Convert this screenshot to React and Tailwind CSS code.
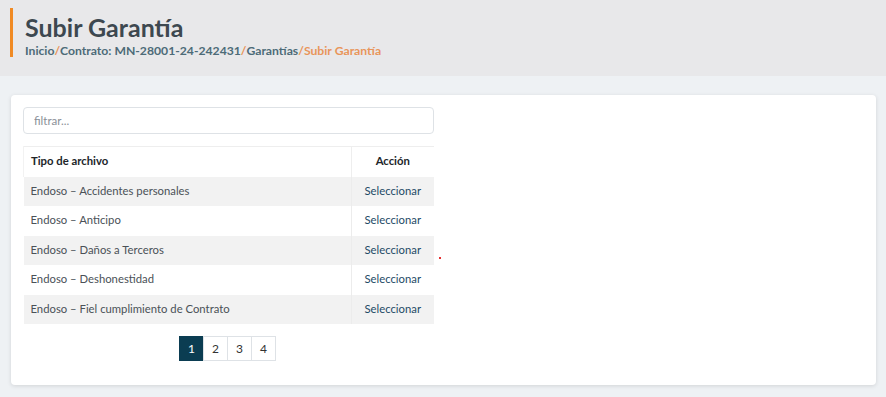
const rows = [
  'Endoso – Accidentes personales',
  'Endoso – Anticipo',
  'Endoso – Daños a Terceros',
  'Endoso – Deshonestidad',
  'Endoso – Fiel cumplimiento de Contrato',
];

const App = () => {
  return (
    <div className="min-h-[397px] bg-[#eef1f4] font-['Lato',sans-serif]">
      {/* Page header */}
      <div className="h-[76px] bg-[#e8e8ea] pt-2 pl-[10px]">
        <div className="border-l-[3px] border-[#f08a24] pl-3 h-[49px]">
          <h1 className="text-[25px] leading-[30px] font-bold text-[#3d4850] pt-[4px]">Subir Garantía</h1>
          <div className="text-[12.2px] font-bold leading-[16px] text-[#4d6b78] mt-[1px]">
            Inicio<span className="text-[#e8955a]">/</span>Contrato: MN-28001-24-242431
            <span className="text-[#e8955a]">/</span>Garantías
            <span className="text-[#e8955a]">/Subir Garantía</span>
          </div>
        </div>
      </div>

      {/* Card */}
      <div className="pt-[19px] pl-[11px] pr-[10px]">
        <div className="relative bg-white rounded shadow-[0_1px_4px_rgba(0,0,0,0.12)] p-3 pb-6">
          <input
            placeholder="filtrar..."
            className="w-[411px] h-[27px] border border-[#dee2e6] rounded px-[10px] text-[11.5px] text-[#495057] placeholder-[#8a9097] outline-none"
          />
          <table className="mt-3 w-[411px] text-[11.3px] border-collapse">
            <thead>
              <tr className="h-[30px] border-t border-[#eeeeee]">
                <th className="text-left font-bold text-[#212529] px-[7px] border-l border-[#f2f2f2]">Tipo de archivo</th>
                <th className="w-[83px] font-bold text-[#212529] text-center border-l border-[#eeeeee]">Acción</th>
              </tr>
            </thead>
            <tbody>
              {rows.map((name, i) => (
                <tr key={i} className={`h-[29.5px] ${i % 2 === 0 ? 'bg-[#f2f2f2]' : 'bg-white'}`}>
                  <td className="px-[7px] text-[#4a5157]">{name}</td>
                  <td className="text-center text-[#1d4a66] border-l border-[#ececec]">Seleccionar</td>
                </tr>
              ))}
            </tbody>
          </table>

          {/* Pagination */}
          <div className="w-[411px] flex justify-center mt-3 -ml-px">
            <div className="flex text-[12px]">
              {[1, 2, 3, 4].map((n) => (
                <div
                  key={n}
                  className={`w-[25px] h-[25px] flex items-center justify-center border ${
                    n === 1 ? 'bg-[#0b3d52] border-[#0b3d52] text-white' : 'border-[#dee2e6] text-[#333] -ml-px'
                  }`}
                >
                  {n}
                </div>
              ))}
            </div>
          </div>

          <span className="absolute left-[428px] top-[162px] w-[2px] h-[2px] bg-[#e53030]" />
        </div>
      </div>
    </div>
  );
};

export default App;
